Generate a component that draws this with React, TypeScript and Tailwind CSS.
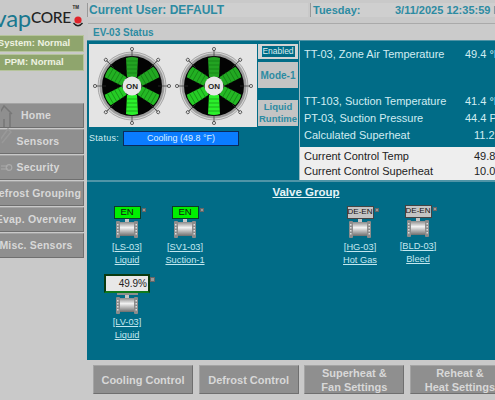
const FONT = { fontFamily: '"Liberation Sans", Arial, sans-serif' };

const NAV = ['Home', 'Sensors', 'Security', 'Defrost Grouping', 'Evap. Overview', 'Misc. Sensors'];
const BLADES = [
  { angle: 0, color: '#22a322' },
  { angle: 60, color: '#22a822' },
  { angle: 120, color: '#24b824' },
  { angle: 180, color: '#2bf02b' },
  { angle: 240, color: '#25cc25' },
  { angle: 300, color: '#22b022' },
];

function Fan() {
  return (
    <svg width="78" height="80" viewBox="-39 -40 78 80" className="shrink-0">
      {[0, 45, 90, 135, 180, 225, 270, 315].map(a => (
        <g key={a} transform={`rotate(${a})`}>
          <circle cx="0" cy="-37" r="1.6" fill="#ddd" stroke="#333" strokeWidth="0.7" />
        </g>
      ))}
      <circle r="34" fill="#d4d4d4" stroke="#a8a8a8" strokeWidth="1" />
      <circle r="32.5" fill="#9c9c9c" />
      <circle r="30" fill="#030303" />
      {[0, 45, 90, 135, 180, 225, 270, 315].map(a => (
        <line key={a} x1="0" y1="-26" x2="0" y2="-36" stroke="#333" strokeWidth="0.7" transform={`rotate(${a})`} />
      ))}
      {BLADES.map(b => (
        <g key={b.angle} transform={`rotate(${b.angle})`}>
          <path d="M-5 -9 L-6 -28 Q0 -30 6 -28 L5 -9 Z" fill={b.color} />
          {[-25, -21, -17, -13].map(y => (
            <line key={y} x1="-6" x2="6" y1={y} y2={y} stroke="#0f6a0f" strokeWidth="0.5" />
          ))}
        </g>
      ))}
      <circle r="9.5" fill="#e6e6e6" />
      <text x="0" y="3" textAnchor="middle" fontSize="8" fontWeight="700" fill="#222" style={FONT}>ON</text>
    </svg>
  );
}

function ValveBody() {
  return (
    <svg width="22" height="20" viewBox="0 0 22 20" className="block">
      <defs>
        <linearGradient id="pipe" x1="0" y1="0" x2="0" y2="1">
          <stop offset="0" stopColor="#8a8a8a" />
          <stop offset="0.4" stopColor="#f2f2f2" />
          <stop offset="1" stopColor="#6e6e6e" />
        </linearGradient>
      </defs>
      <rect x="9" y="0" width="4" height="3" fill="#c4c4c4" />
      <rect x="2" y="3" width="18" height="14" fill="url(#pipe)" />
      <rect x="0" y="2" width="4" height="17" rx="1" fill="#8c8c8c" />
      <rect x="18" y="2" width="4" height="17" rx="1" fill="#8c8c8c" />
      {[5, 8, 11, 14].map(y => (
        <g key={y}>
          <rect x="1" y={y} width="1.5" height="1.5" fill="#ddd" />
          <rect x="19.5" y={y} width="1.5" height="1.5" fill="#ddd" />
        </g>
      ))}
    </svg>
  );
}

function Valve({ state, tag, name }: { state: 'EN' | 'DE-EN'; tag: string; name: string }) {
  return (
    <div className="w-[58px] flex flex-col items-center text-[9.25px] leading-[12.5px] text-[#c4e8f0]">
      <div className="relative">
        <div
          className={`w-[27px] h-[13px] flex items-center justify-center whitespace-nowrap text-[#111] border ${
            state === 'EN' ? 'bg-[#00f000] border-[#0b3d2a] text-[9.5px]' : 'bg-[#c4c4c4] border-[#444] text-[8px]'
          }`}
        >
          {state}
        </div>
        <div className="absolute left-[28px] top-[2px] w-[4px] h-[4px] bg-[#999] border border-[#666]" />
      </div>
      <ValveBody />
      <span className="mt-[2px] underline whitespace-nowrap">[{tag}]</span>
      <span className="underline whitespace-nowrap">{name}</span>
    </div>
  );
}

function AnalogValve() {
  return (
    <div className="w-[58px] flex flex-col items-center text-[9.25px] leading-[12.5px] text-[#c4e8f0]">
      <div className="relative">
        <div className="w-[46px] h-[19px] bg-[#e8e8e8] border-2 border-[#0a3a10] border-b-[#0f7a1c] text-[#222] text-[10px] leading-[15px] text-right pr-[1px]">
          49.9%
        </div>
        <div className="absolute left-[46px] top-[3px] w-[5px] h-[5px] bg-[#999] border border-[#666]" />
      </div>
      <div className="w-[21px] h-[2px] bg-[#8f8f8f]" />
      <ValveBody />
      <span className="mt-[1px] underline">[LV-03]</span>
      <span className="underline">Liquid</span>
    </div>
  );
}

function Reading({ label, value, indent, dark }: { label: string; value: string; indent?: boolean; dark?: boolean }) {
  return (
    <div className={`flex items-center whitespace-nowrap ${dark ? 'text-[#222]' : 'text-[#d2ecf2]'}`}>
      <span className="w-[161px] shrink-0">{label}</span>
      <span className={indent ? 'pl-[9px]' : ''}>{value}</span>
    </div>
  );
}

export default function App() {
  return (
    <div className="w-[495px] h-[400px] overflow-hidden flex bg-[#c9c9c9]" style={FONT}>
      {/* Sidebar */}
      <div className="w-[87px] shrink-0 overflow-hidden flex flex-col items-end pr-[3px]">
        <div className="h-[35px] w-[84px] shrink-0 flex items-center justify-end relative whitespace-nowrap pr-[13px]">
          <span className="text-[24px] tracking-[-0.3px] text-[#19788f]" style={{ fontFamily: 'Lato, sans-serif' }}>vap</span>
          <span className="text-[15.5px] tracking-[-0.3px] text-[#222] font-medium" style={{ fontFamily: 'Lato, sans-serif' }}>CORE</span>
          <span className="absolute right-[5px] top-[5px] text-[4.5px] leading-[5px] font-bold text-[#222]">TM</span>
          <svg width="12" height="14" viewBox="0 0 12 14" className="absolute right-0 top-[15px]">
            <circle cx="6" cy="5" r="3.6" fill="#e0232a" />
            <path d="M1.5 8 Q6 13.5 10.5 8" fill="none" stroke="#222" strokeWidth="1.4" />
          </svg>
        </div>
        <div className="w-[100px] h-[17px] shrink-0 flex items-center justify-center whitespace-nowrap bg-[#8fa56d] border border-[#b6c49c] text-[#eef2e2] text-[9.5px] font-bold">
          System: Normal
        </div>
        <div className="w-[100px] h-[17px] shrink-0 mt-[2px] flex items-center justify-center whitespace-nowrap bg-[#8fa56d] border border-[#b6c49c] text-[#eef2e2] text-[9.5px] font-bold">
          PPM: Normal
        </div>
        <div className="mt-[32px] flex flex-col gap-[1px]">
          {NAV.map((item, i) => (
            <div
              key={item}
              className="relative w-[96px] h-[25px] flex items-center justify-center whitespace-nowrap bg-[#8f8f8f] border-t border-l border-t-[#a4a4a4] border-l-[#a4a4a4] border-b border-r border-b-[#6f6f6f] border-r-[#6f6f6f] text-[#d8d8d8] text-[10.5px] font-bold tracking-[0.2px]"
            >
              {i === 0 && (
                <svg width="12" height="24" viewBox="0 0 12 24" className="absolute left-[12px] -top-[1px]" fill="none" stroke="#777" strokeWidth="1.5">
                  <path d="M-2 11 L3 3 L11 11 M9 10 V24 M3 16 V24" />
                </svg>
              )}
              {i === 1 && (
                <svg width="12" height="20" viewBox="0 0 12 20" className="absolute left-[12px] -top-[5px]" fill="none" stroke="#999" strokeWidth="1.5">
                  <path d="M-1 15 L7 4 L10 7 L1 18" />
                </svg>
              )}
              {i === 2 && (
                <svg width="12" height="12" viewBox="0 0 12 12" className="absolute left-[12px] top-[5px]" fill="none" stroke="#aaa" strokeWidth="1.2">
                  <path d="M0 5 H7 M0 8 H7" />
                  <circle cx="8" cy="6.5" r="2.8" />
                </svg>
              )}
              <span className={i === 1 || i === 2 ? 'pl-[4px]' : ''}>{item}</span>
            </div>
          ))}
        </div>
      </div>

      {/* Main */}
      <div className="flex-1 min-w-0 flex flex-col">
        <div className="mt-[3px] h-[14px] shrink-0 flex gap-[2px] font-bold text-[#2d8ba2] whitespace-nowrap overflow-hidden">
          <div className="w-[221px] shrink-0 flex items-center pl-[1px] text-[12px] bg-[#cfcfcf] border-l border-[#999]">Current User: DEFAULT</div>
          <div className="flex-1 flex items-center pl-[2px] text-[11px] bg-[#cfcfcf] border-l border-[#999]">
            <span className="w-[82px] shrink-0">Tuesday:</span>
            <span>3/11/2025 12:35:59 PM</span>
          </div>
        </div>
        <div className="mt-[6px] h-[17px] shrink-0 ml-px flex items-center pl-[5px] bg-[#cbcbcb] border-t border-[#aaa] text-[10px] font-bold text-[#2d8ba2]">
          EV-03 Status
        </div>

        <div className="h-[320px] shrink-0 bg-[#016c87] flex flex-col border-t border-[#4d93a5]">
          {/* Status section */}
          <div className="h-[141px] flex border-b-2 border-[#4f95a7]">
            <div className="w-[171px] pl-[2px] pt-[3px] shrink-0">
              <div className="w-[168px] h-[83px] bg-[#e4e4e4] flex items-center justify-center gap-[4px] overflow-hidden">
                <Fan />
                <Fan />
              </div>
              <div className="mt-[4px] flex items-center text-[#d2ecf2]">
                <span className="w-[34px] text-[9px] tracking-[0.3px]">Status:</span>
                <div className="w-[116px] h-[15px] bg-[#0a7cff] border border-[#0a2a5a] flex items-center justify-center whitespace-nowrap text-[9px] text-[#dff0ff]">
                  Cooling (49.8 °F)
                </div>
              </div>
            </div>
            <div className="w-[41px] shrink-0 pt-[3px] flex flex-col">
              <div className="w-[40px] h-[15px] bg-[#d4d4d4] flex items-center justify-center">
                <span className="w-[33px] h-[11px] bg-[#016c87] flex items-center justify-center text-[8.5px] text-[#dcecf0]">Enabled</span>
              </div>
              <div className="mt-[3px] w-[40px] h-[26px] bg-[#c4c4c4] flex items-center justify-center whitespace-nowrap text-[10px] font-bold text-[#2d8ba2]">Mode-1</div>
              <div className="mt-[12px] w-[40px] h-[26px] bg-[#c4c4c4] flex flex-col items-center justify-center text-[9.5px] leading-[12px] font-bold text-[#2d8ba2]">
                <span>Liquid</span>
                <span>Runtime</span>
              </div>
            </div>
            <div className="flex-1 min-w-0 flex flex-col border-l border-[#9ab8c0]">
              <div className="flex-1 pl-[4px] pt-[5px] text-[11px] leading-[17px]">
                <Reading label="TT-03, Zone Air Temperature" value="49.4 °F" />
                <div className="mt-[30px]">
                  <Reading label="TT-103, Suction Temperature" value="41.4 °F" />
                </div>
                <Reading label="PT-03, Suction Pressure" value="44.4 PSI" />
                <Reading label="Calculated Superheat" value="11.2" indent />
              </div>
              <div className="h-[33px] bg-[#eeeeee] pl-[4px] pt-[2px] text-[11px] leading-[15px]">
                <Reading label="Current Control Temp" value="49.8" indent dark />
                <Reading label="Current Control Superheat" value="10.0" indent dark />
              </div>
            </div>
          </div>

          {/* Valve group */}
          <div className="flex-1">
            <div className="pt-[2px] h-[24px] text-center text-[11.5px] font-bold underline text-[#e6f4f7] pl-[30px]">Valve Group</div>
            <div className="flex pl-[11px]">
              <Valve state="EN" tag="LS-03" name="Liquid" />
              <Valve state="EN" tag="SV1-03" name="Suction-1" />
              <div className="w-[117px]" />
              <Valve state="DE-EN" tag="HG-03" name="Hot Gas" />
              <div className="-mt-px">
                <Valve state="DE-EN" tag="BLD-03" name="Bleed" />
              </div>
            </div>
            <div className="pl-[11px] mt-[8px]">
              <AnalogValve />
            </div>
          </div>
        </div>

        {/* Bottom buttons */}
        <div className="mt-[5px] flex gap-[5.67px] pl-[6px] text-[11px] leading-[14px] font-bold text-[#d8d8d8] text-center">
          {[['Cooling Control'], ['Defrost Control'], ['Superheat &', 'Fan Settings'], ['Reheat &', 'Heat Settings']].map(lines => (
            <div
              key={lines[0]}
              className="w-[100px] h-[29px] shrink-0 flex flex-col items-center justify-center whitespace-nowrap bg-[#8f8f8f] border border-t-[#a4a4a4] border-l-[#a4a4a4] border-b-[#6f6f6f] border-r-[#6f6f6f]"
            >
              {lines.map(l => <span key={l}>{l}</span>)}
            </div>
          ))}
        </div>
      </div>
    </div>
  );
}
